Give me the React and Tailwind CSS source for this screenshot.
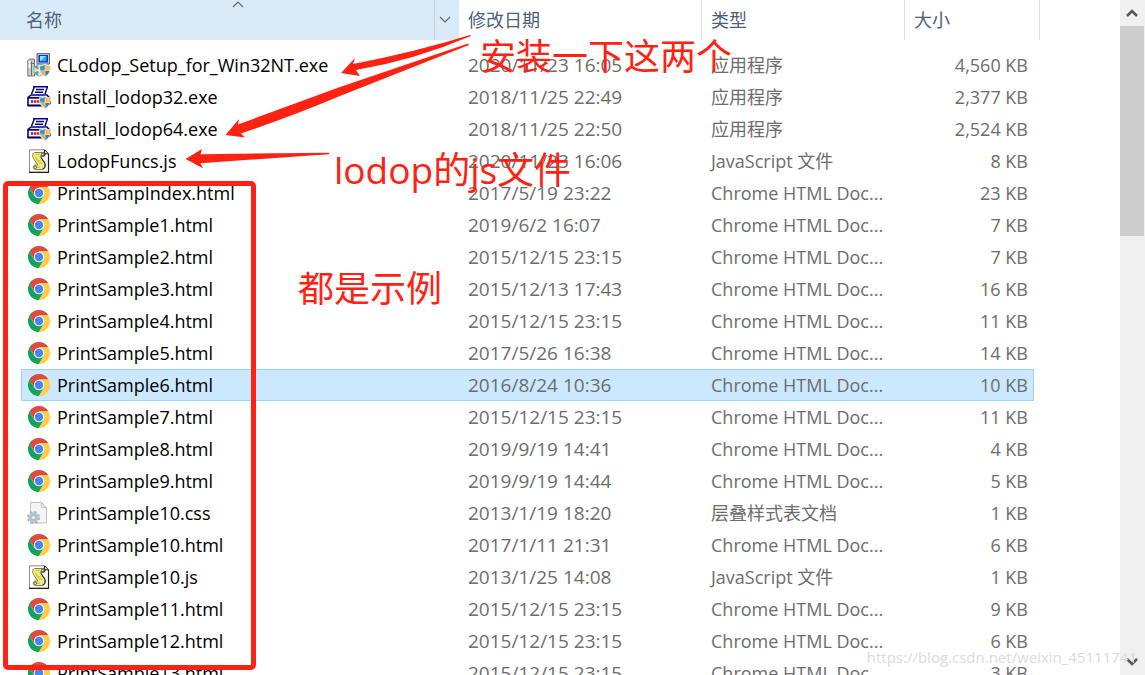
import React from "react";

const CHROME = "Chrome HTML Doc...";
const files = [
  ["setup", "CLodop_Setup_for_Win32NT.exe", "2020/11/23 16:05", "应用程序", "4,560 KB"],
  ["printer", "install_lodop32.exe", "2018/11/25 22:49", "应用程序", "2,377 KB"],
  ["printer", "install_lodop64.exe", "2018/11/25 22:50", "应用程序", "2,524 KB"],
  ["js", "LodopFuncs.js", "2020/11/23 16:06", "JavaScript 文件", "8 KB"],
  ["chrome", "PrintSampIndex.html", "2017/5/19 23:22", CHROME, "23 KB"],
  ["chrome", "PrintSample1.html", "2019/6/2 16:07", CHROME, "7 KB"],
  ["chrome", "PrintSample2.html", "2015/12/15 23:15", CHROME, "7 KB"],
  ["chrome", "PrintSample3.html", "2015/12/13 17:43", CHROME, "16 KB"],
  ["chrome", "PrintSample4.html", "2015/12/15 23:15", CHROME, "11 KB"],
  ["chrome", "PrintSample5.html", "2017/5/26 16:38", CHROME, "14 KB"],
  ["chrome", "PrintSample6.html", "2016/8/24 10:36", CHROME, "10 KB"],
  ["chrome", "PrintSample7.html", "2015/12/15 23:15", CHROME, "11 KB"],
  ["chrome", "PrintSample8.html", "2019/9/19 14:41", CHROME, "4 KB"],
  ["chrome", "PrintSample9.html", "2019/9/19 14:44", CHROME, "5 KB"],
  ["css", "PrintSample10.css", "2013/1/19 18:20", "层叠样式表文档", "1 KB"],
  ["chrome", "PrintSample10.html", "2017/1/11 21:31", CHROME, "6 KB"],
  ["js", "PrintSample10.js", "2013/1/25 14:08", "JavaScript 文件", "1 KB"],
  ["chrome", "PrintSample11.html", "2015/12/15 23:15", CHROME, "9 KB"],
  ["chrome", "PrintSample12.html", "2015/12/15 23:15", CHROME, "6 KB"],
  ["chrome", "PrintSample13.html", "2015/12/15 23:15", CHROME, "3 KB"],
];
const SELECTED = "PrintSample6.html";

function Shield() {
  return (
    <g>
      <path d="M18 10.500c-1.800 1.300-3.800 2-6 2 0 5.700 1.600 9.200 6 11.500 4.400-2.300 6-5.800 6-11.500-2.200 0-4.200-.7-6-2z" fill="#dfe5ea" />
      <path d="M17.700 11.700c-1.400 1-3 1.500-4.700 1.700 0 1.600.1 2.900.5 4.100h4.200z" fill="#3d92d6" />
      <path d="M18.300 11.700c1.400 1 3 1.500 4.700 1.700 0 1.600-.1 2.900-.5 4.100h-4.200z" fill="#ffc233" />
      <path d="M17.700 17.900h-4.100c.7 2.200 1.900 3.800 4.100 5.100z" fill="#f5b325" />
      <path d="M18.300 17.900h4.100c-.7 2.200-1.900 3.800-4.100 5.100z" fill="#2f7fc6" />
    </g>
  );
}

function SetupIcon() {
  return (
    <>
      <path d="M.8 7.500L3 6h4.500v17H.8z" fill="#c9cccb" stroke="#777" strokeWidth="1" />
      <path d="M4.500 8.500v14M1 10.500h6" stroke="#6b6b6b" strokeWidth="1" />
      <path d="M1.500 8h2v7h-2z" fill="#f6f6f6" />
      <path d="M10 .6h12.500V11H10z" fill="#c4cad4" stroke="#5a6478" strokeWidth="1" />
      <path d="M11.500 2h9.500v7.500h-9.500z" fill="#0a35c2" />
      <path d="M13 3h6.500v5.300H13z" fill="#1faef7" />
      <path d="M13 8.300L19 3h-6z" fill="#8de6ff" />
      <path d="M9 11.500h13v2H9z" fill="#8f96a3" />
      <circle cx="12.300" cy="17.300" r="5.600" fill="#d9e5dc" stroke="#8fa39a" strokeWidth=".8" />
      <path d="M12.300 17.300L7.500 14.500a5.500 5.500 0 0 1 3-2.300zM12.300 17.300l-1.500 5.300a5.500 5.500 0 0 1-3.400-3z" fill="#4fb08a" />
      <circle cx="12.300" cy="17.300" r="1.500" fill="#fff" />
      <Shield />
    </>
  );
}

function PrinterIcon() {
  return (
    <>
      <path d="M7 1.200h14L17.500 10H3.500z" fill="#fff" />
      <path d="M6 1.800h15M7.500 1.800L4.500 9M20.500 1.800L18 9M9 4.500h8M8 7.200h8" fill="none" stroke="#00007f" strokeWidth="1.500" />
      <path d="M4 10h16l3 3.500v5l-3 2H1v-8z" fill="#fff" stroke="#00007f" strokeWidth="1.600" />
      <path d="M1 12.800h20" stroke="#00007f" strokeWidth="1.800" />
      <path d="M4 16.500h9" stroke="#e00000" strokeWidth="2.400" strokeDasharray="2.200 .9" />
      <path d="M1 20.500h15" stroke="#00007f" strokeWidth="1.800" />
      <Shield />
    </>
  );
}

function JsIcon() {
  return (
    <>
      <path d="M2.500 .8h15l4 4v18.500h-19z" fill="#fff" stroke="#8a8a8a" strokeWidth="1" />
      <path d="M2 23.300h20M21.500 5v18" stroke="#222" strokeWidth="1.200" />
      <path d="M17.500 .8v4h4z" fill="#eee" stroke="#222" strokeWidth="1" />
      <path d="M8 3.500h8.500c2 0 2 3.500.2 3.500H13l4.500 6.500c2 3 .3 7-2.800 7H8.500c-3 0-3-4.500 0-4.500h2.300L6.500 9.500C4.700 6.500 5.800 3.500 8 3.500z" fill="#f4ee86" stroke="#77734a" strokeWidth=".9" />
      <path d="M14 7h2.700c1.800 0 1.800-3.500-.2-3.500M15.500 20.200c2.400-.8 3.300-3.800 2-6.500L14 8.500" fill="none" stroke="#2b2a1c" strokeWidth="1.100" />
      <path d="M8.500 5.500h4M8 8l3 3.700h2.500M12 14h3M9.500 18.300h3.500" fill="none" stroke="#d2c93c" strokeWidth="1.400" />
      <circle cx="15.500" cy="5.300" r="1.200" fill="#fff" stroke="#444230" strokeWidth=".8" />
      <circle cx="8.300" cy="18.300" r="1.300" fill="#fff" stroke="#444230" strokeWidth=".8" />
    </>
  );
}

function CssIcon() {
  return (
    <>
      <path d="M3.500 1.500h11l5 5v15.500h-16z" fill="#f4f5f6" stroke="#bfc3c6" strokeWidth="1" />
      <path d="M14.500 1.500v5h5z" fill="#e4e6e8" stroke="#bfc3c6" strokeWidth="1" />
      <circle cx="6.500" cy="16.500" r="5.400" fill="none" stroke="#a3b5c2" strokeWidth="2.200" strokeDasharray="2.440 1.800" />
      <circle cx="6.500" cy="16.500" r="3.600" fill="#fff" stroke="#b3c4d0" strokeWidth="3" />
      <circle cx="6.500" cy="16.500" r="2" fill="#f6f8f9" stroke="#8da1af" strokeWidth=".8" />
    </>
  );
}

function ChromeIcon() {
  return (
    <>
      <path d="M2.470 6.500A11 11 0 0 1 21.530 6.500H12L7.240 14.750z" fill="#db4c3f" />
      <path d="M2.470 6.500L7.240 14.750H16.760L12 23A11 11 0 0 1 2.470 6.500z" fill="#17a15f" />
      <path d="M21.530 6.500A11 11 0 0 1 12 23L16.760 14.750 12 6.500z" fill="#ffce43" />
      <circle cx="12" cy="12" r="5.200" fill="#f3f5f5" />
      <circle cx="12" cy="12" r="4.200" fill="#4587f3" />
    </>
  );
}

const icons = { setup: SetupIcon, printer: PrinterIcon, js: JsIcon, css: CssIcon, chrome: ChromeIcon };

function FileRow({ file }) {
  const [kind, name, date, type, size] = file;
  const Icon = icons[kind];
  const selected = name === SELECTED;
  const fill = selected ? "bg-[#cce8ff] border-y border-[#99d1ff]" : "";
  return (
    <tr className="h-8 leading-6" aria-selected={selected}>
      <td />
      <td className={`${fill} ${selected ? "border-l" : ""} p-0`}>
        <div className={`${selected ? "pl-[5px]" : "pl-[6px]"} flex items-center gap-[6px] text-[18px] text-black`}>
          <svg className="size-6 shrink-0" viewBox="0 0 24 24" aria-hidden="true"><Icon /></svg>
          <span className="whitespace-nowrap">{name}</span>
        </div>
      </td>
      <td className={`${fill} p-0 pl-[9px] text-[19px]`}>{date}</td>
      <td className={`${fill} p-0 pl-[9px] text-[18px] truncate`}>{type}</td>
      <td className={`${fill} ${selected ? "border-r pr-[5px]" : "pr-[6px]"} p-0 text-right text-[18px]`}>{size}</td>
      <td />
      <td />
    </tr>
  );
}

function Chevron({ d, className, width }) {
  return (
    <svg className={className} viewBox="0 0 12 8" fill="none" stroke="currentColor" strokeWidth={width} aria-hidden="true">
      <path d={d} />
    </svg>
  );
}
const UP = "M1 7l5-5 5 5";
const DOWN = "M1 1l5 5 5-5";

function Note({ className, children }) {
  return <p className={`${className} absolute whitespace-nowrap leading-[48px] text-[#ff2213]`}>{children}</p>;
}

export default function App() {
  return (
    <main className="relative flex h-screen overflow-hidden bg-white font-['Open_Sans','Noto_Sans_CJK_SC',sans-serif] text-[#6d6d6d]">
      <div className="min-w-0 flex-1 overflow-hidden">
        <table className="w-full table-fixed border-separate border-spacing-0">
          <colgroup>
            <col className="w-[21px]" />
            <col className="w-[438px]" />
            <col className="w-[243px]" />
            <col className="w-[203px]" />
            <col className="w-[129px]" />
            <col className="w-[6px]" />
            <col />
          </colgroup>
          <thead>
            <tr className="h-10 text-left text-[18px] leading-6 text-[#4c607a]">
              <th colSpan={2} className="relative bg-[#d9ebf9] p-0 font-normal">
                <div className="flex h-10 items-stretch">
                  <button className="flex-1 pl-[26px] text-left">名称</button>
                  <button aria-label="筛选" className="flex w-[25px] items-center justify-center border-l border-[#b9d3e8] pr-1 text-[#666]">
                    <Chevron d={DOWN} width="1.200" className="h-2 w-3" />
                  </button>
                </div>
                <Chevron d={UP} width="1.200" className="absolute left-1/2 top-0 ml-[2px] h-2 w-3 text-[#666]" />
              </th>
              <th className="border-r border-[#e0e0e0] p-0 pl-[9px] font-normal"><button>修改日期</button></th>
              <th className="border-r border-[#e0e0e0] p-0 pl-[9px] font-normal"><button>类型</button></th>
              <th colSpan={2} className="border-r border-[#e0e0e0] p-0 pl-[9px] font-normal"><button>大小</button></th>
              <td />
            </tr>
          </thead>
          <tbody>
            <tr className="h-[9px]"><td colSpan={7} className="p-0" /></tr>
            {files.map((file) => <FileRow key={file[1]} file={file} />)}
          </tbody>
        </table>
      </div>

      <div className="flex w-[25px] shrink-0 flex-col bg-[#f0f0f0] pr-px text-[#555]">
        <button aria-label="向上滚动" className="flex h-[26px] items-center justify-center">
          <Chevron d={UP} width="2.500" className="h-2 w-3" />
        </button>
        <div className="h-[210px] bg-[#cdcdcd]" />
        <button aria-label="向下滚动" className="mt-auto flex h-[26px] items-center justify-center">
          <Chevron d={DOWN} width="2.500" className="h-2 w-3" />
        </button>
      </div>

      <div className="pointer-events-none absolute left-[3px] top-[181px] h-[489px] w-[253px] rounded-[5px] border-[5px] border-[#ff2213]" />
      <svg className="pointer-events-none absolute left-0 top-0 h-[200px] w-[500px]" viewBox="0 0 500 200" fill="#ff2213" aria-hidden="true">
        <path d="M341 73L355 58 353 64Q415 52 470 35L471 36Q415 60 356 70L360 76z" />
        <path d="M225.500 135L239 119 238 124.500L340 87 468 43.500 469 45 340 96Q290 117 241 133.500L245 137.500z" />
        <path d="M185.500 159L202 149 200.500 154.200L329 152.700V154.200L200.500 163.200 203 168.300z" />
      </svg>
      <Note className="left-[480px] top-[33px] text-[36px]">安装一下这两个</Note>
      <Note className="left-[334px] top-[146px] text-[37px]">lodop的js文件</Note>
      <Note className="left-[298px] top-[265px] text-[36px]">都是示例</Note>
      <p className="pointer-events-none absolute bottom-[6px] right-2 text-[15px] leading-6 text-[#dcdcdc]">https://blog.csdn.net/weixin_45111741</p>
    </main>
  );
}
